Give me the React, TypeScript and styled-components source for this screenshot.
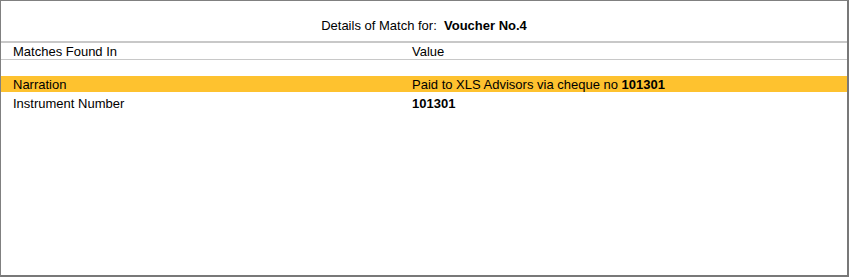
import styled, { createGlobalStyle } from "styled-components";

const GlobalStyle = createGlobalStyle`
  html, body {
    margin: 0;
    padding: 0;
    background: #ffffff;
  }
  body {
    font-family: "Liberation Sans", Arial, sans-serif;
    font-size: 13px;
    color: #000000;
  }
`;

const Frame = styled.div`
  box-sizing: border-box;
  width: 849px;
  height: 277px;
  border-top: 1px solid #808080;
  border-left: 1px solid #808080;
  border-right: 2px solid #787878;
  border-bottom: 2px solid #787878;
  background: #ffffff;
  display: flex;
  flex-direction: column;
`;

const TitleBar = styled.div`
  box-sizing: border-box;
  height: 42px;
  padding-top: 16px;
  line-height: 17px;
  text-align: center;
  border-bottom: 2px solid #c8c8c8;
  white-space: pre;
`;

const Strong = styled.b`
  font-weight: 700;
`;

const Row = styled.div<{ $highlight?: boolean; $divider?: boolean }>`
  display: grid;
  grid-template-columns: 411px 1fr;
  height: 16px;
  line-height: 17px;
  background: ${(p) => (p.$highlight ? "#fec22f" : "transparent")};
  border-bottom: ${(p) => (p.$divider ? "1px solid #c8c8c8" : "none")};
`;

const Spacer = styled.div`
  height: 16px;
`;

const Rows = styled.div`
  display: flex;
  flex-direction: column;
  gap: 3px;
`;

const LabelCell = styled.div`
  padding-left: 12px;
  white-space: nowrap;
`;

const ValueCell = styled.div`
  white-space: nowrap;
`;

const matches = [
  {
    label: "Narration",
    value: (
      <>
        Paid to XLS Advisors via cheque no <Strong>101301</Strong>
      </>
    ),
    highlight: true,
  },
  { label: "Instrument Number", value: <Strong>101301</Strong>, highlight: false },
];

export default function App() {
  return (
    <>
      <GlobalStyle />
      <Frame>
        <TitleBar>
          {"Details of Match for:  "}
          <Strong>Voucher No.4</Strong>
        </TitleBar>
        <Row $divider>
          <LabelCell>Matches Found In</LabelCell>
          <ValueCell>Value</ValueCell>
        </Row>
        <Spacer />
        <Rows>
          {matches.map((m, i) => (
            <Row key={i} $highlight={m.highlight}>
              <LabelCell>{m.label}</LabelCell>
              <ValueCell>{m.value}</ValueCell>
            </Row>
          ))}
        </Rows>
      </Frame>
    </>
  );
}
